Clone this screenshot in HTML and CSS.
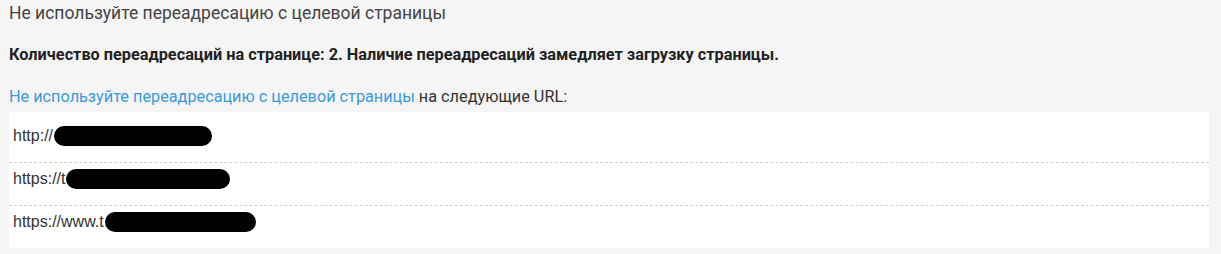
FILE: index.html
```html
<!DOCTYPE html>
<html lang="ru">
<head>
  <meta charset="UTF-8" />
  <title>Переадресации</title>
  <link rel="stylesheet" href="styles.css">
</head>
<body>
  <div class="check">
    <h3 class="check-title">Не используйте переадресацию с целевой страницы</h3>
    <p class="check-summary">Количество переадресаций на странице: 2. Наличие переадресаций замедляет загрузку страницы.</p>
    <p class="check-text"><a href="#">Не используйте переадресацию с целевой страницы</a> на следующие URL:</p>
    <ul class="url-list">
      <li>http://<span class="mask mask-1"></span></li>
      <li>https://t<span class="mask mask-2"></span></li>
      <li>https://www.t<span class="mask mask-3"></span></li>
    </ul>
  </div>
</body>
</html>
```

FILE: styles.css
```css
* {margin: 0; padding: 0; box-sizing: border-box;}
body {
  background: #f5f5f5;
  font-family: Roboto, "Liberation Sans", sans-serif;
  color: #333;
}

.check {padding: 3px 12px 0 9px;}

.check-title {
  font-size: 17.5px;
  font-weight: 400;
  color: #444;
  line-height: 20px;
}

.check-summary {
  margin-top: 22px;
  font-size: 16.3px;
  font-weight: 700;
  color: #222;
  line-height: 20px;
}

.check-text {
  margin-top: 22px;
  font-size: 16.25px;
  line-height: 20px;
  color: #333;
}

.check-text a {
  color: #3a9bdc;
  text-decoration: none;
}

.url-list {
  list-style: none;
  margin-top: 5px;
  background: #fff;
  padding-top: 8px;
  font-family: "Liberation Sans", Arial, sans-serif;
  font-size: 16px;
  color: #333;
}

.url-list li {
  display: flex;
  align-items: flex-start;
  height: 43px;
  padding: 8px 4px 0;
  line-height: 16px;
  border-bottom: 1px dashed #d0d0d0;
}

.url-list li:last-child {border-bottom: none; height: 42px;}

.mask {
  display: inline-block;
  height: 20px;
  margin-top: -2px;
  background: #000;
  border-radius: 10px;
}

.mask-1 {width: 158px; margin-left: 1px;}
.mask-2 {width: 164px; margin-left: 1px;}
.mask-3 {width: 151px; margin-left: 1px;}
```
